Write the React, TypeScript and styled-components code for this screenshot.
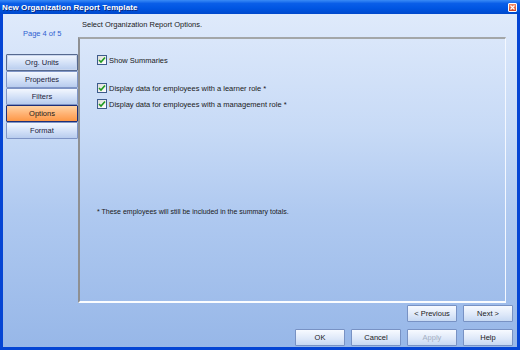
import { FC } from 'react';
import styled, { createGlobalStyle, css } from 'styled-components';

const GlobalStyle = createGlobalStyle`
  html, body {
    margin: 0;
    padding: 0;
    background: #ffffff;
  }
  body {
    font-family: 'Liberation Sans', Arial, sans-serif;
  }
`;

const Window = styled.div`
  width: 520px;
  height: 350px;
  display: flex;
  flex-direction: column;
  box-sizing: border-box;
  overflow: hidden;
`;

const TitleBar = styled.div`
  height: 14px;
  flex: none;
  display: flex;
  align-items: center;
  justify-content: space-between;
  padding: 0 3px 0 2px;
  background: linear-gradient(#3a8bf6 0%, #0a5ee8 25%, #0055e2 60%, #0048cc 100%);
  color: #ffffff;
  font-size: 8px;
  font-weight: bold;
  letter-spacing: 0.1px;
  text-shadow: 1px 1px 0 #0a2a80;
`;

const CloseButton = styled.div`
  width: 9px;
  height: 9px;
  box-sizing: border-box;
  border: 1px solid #ffffff;
  border-radius: 1px;
  background: linear-gradient(#f08a68, #d2461f);
  display: flex;
  align-items: center;
  justify-content: center;
`;

const Body = styled.div`
  flex: 1;
  display: flex;
  flex-direction: column;
  border: 3px solid #0545d4;
  border-top: none;
  background: linear-gradient(#dfeafb 0%, #c7daf6 35%, #afc9f0 60%, #97b7e8 100%);
  padding: 0 4px 1px 0;
`;

const Main = styled.div`
  display: flex;
  height: 289px;
`;

const Sidebar = styled.div`
  width: 75px;
  padding: 14px 0 0 3px;
  box-sizing: border-box;
  display: flex;
  flex-direction: column;
`;

const PageLabel = styled.div`
  height: 12px;
  line-height: 12px;
  font-size: 7.5px;
  color: #2f5fd0;
  padding-left: 17px;
`;

const NavList = styled.div`
  margin-top: 14px;
  display: flex;
  flex-direction: column;
`;

const NavButton = styled.div<{ $active?: boolean; $focused?: boolean }>`
  height: 17px;
  box-sizing: border-box;
  display: flex;
  align-items: center;
  justify-content: center;
  font-size: 7.5px;
  color: #1c1c3c;
  border: 1px solid #7f95c6;
  border-radius: 1px;
  background: linear-gradient(#f3f7fe, #d2e0f7 55%, #b8ccee);
  ${(p) =>
    p.$focused &&
    css`
      border-color: #56698f;
      box-shadow: inset 0 0 0 1px #c9d6ee;
    `}
  ${(p) =>
    p.$active &&
    css`
      border-color: #1e2f78;
      background: linear-gradient(#ffd3a4, #ffb070 55%, #fd9846);
      color: #1a1a1a;
    `}
`;

const Content = styled.div`
  flex: 1;
  display: flex;
  flex-direction: column;
  margin-right: 7px;
`;

const Heading = styled.div`
  height: 23px;
  box-sizing: border-box;
  padding: 5px 0 0 4px;
  line-height: 12px;
  font-size: 7.5px;
  color: #1a1a1a;
`;

const Panel = styled.div`
  flex: 1;
  box-sizing: border-box;
  border-top: 2px solid #a3a6a8;
  border-left: 2px solid #8e9093;
  border-right: 1px solid #f4f8ff;
  border-bottom: 2px solid #fbfdff;
  padding: 13px 0 0 17px;
  display: flex;
  flex-direction: column;
`;

const CheckRow = styled.label<{ $gap?: number }>`
  display: flex;
  align-items: center;
  gap: 2px;
  height: 16px;
  margin-top: ${(p) => p.$gap ?? 0}px;
  font-size: 7.5px;
  color: #1a1a1a;
`;

const Box = styled.span`
  width: 10px;
  height: 10px;
  box-sizing: border-box;
  border: 1px solid #3d5b8c;
  background: linear-gradient(135deg, #dcdcd6, #ffffff);
  display: flex;
  align-items: center;
  justify-content: center;
`;

const Note = styled.div`
  margin-top: 96px;
  font-size: 7px;
  color: #1a1a1a;
`;

const ButtonRow = styled.div<{ $top: number }>`
  display: flex;
  justify-content: flex-end;
  gap: 6px;
  margin-top: ${(p) => p.$top}px;
`;

const Button = styled.div<{ $disabled?: boolean }>`
  width: 50px;
  height: 17px;
  box-sizing: border-box;
  display: flex;
  align-items: center;
  justify-content: center;
  font-size: 7.5px;
  color: ${(p) => (p.$disabled ? '#a4afc2' : '#1a1a1a')};
  border: 1px solid #7892c4;
  border-radius: 1px;
  background: linear-gradient(#f7faff, #dfe9f9 55%, #c7d9f3);
`;

const Check: FC = () => (
  <svg width="8" height="8" viewBox="0 0 8 8">
    <path d="M1 4 L3 6 L7 1.5" fill="none" stroke="#1f9a1f" strokeWidth="1.6" />
  </svg>
);

const CheckOption: FC<{ label: string; gap?: number }> = ({ label, gap }) => (
  <CheckRow $gap={gap}>
    <Box>
      <Check />
    </Box>
    {label}
  </CheckRow>
);

const navItems = ['Org. Units', 'Properties', 'Filters', 'Options', 'Format'];

const App: FC = () => {
  return (
    <>
      <GlobalStyle />
      <Window>
        <TitleBar>
          <span>New Organization Report Template</span>
          <CloseButton>
            <svg width="5" height="5" viewBox="0 0 5 5">
              <path d="M0.5 0.5 L4.5 4.5 M4.5 0.5 L0.5 4.5" stroke="#ffffff" strokeWidth="1.2" />
            </svg>
          </CloseButton>
        </TitleBar>
        <Body>
          <Main>
            <Sidebar>
              <PageLabel>Page 4 of 5</PageLabel>
              <NavList>
                {navItems.map((item, i) => (
                  <NavButton key={i} $focused={i === 0} $active={item === 'Options'}>
                    {item}
                  </NavButton>
                ))}
              </NavList>
            </Sidebar>
            <Content>
              <Heading>Select Organization Report Options.</Heading>
              <Panel>
                <CheckOption label="Show Summaries" />
                <CheckOption label="Display data for employees with a learner role *" gap={12} />
                <CheckOption label="Display data for employees with a management role *" />
                <Note>* These employees will still be included in the summary totals.</Note>
              </Panel>
            </Content>
          </Main>
          <ButtonRow $top={2}>
            <Button>&lt; Previous</Button>
            <Button>Next &gt;</Button>
          </ButtonRow>
          <ButtonRow $top={7}>
            <Button>OK</Button>
            <Button>Cancel</Button>
            <Button $disabled>Apply</Button>
            <Button>Help</Button>
          </ButtonRow>
        </Body>
      </Window>
    </>
  );
};

export default App;
